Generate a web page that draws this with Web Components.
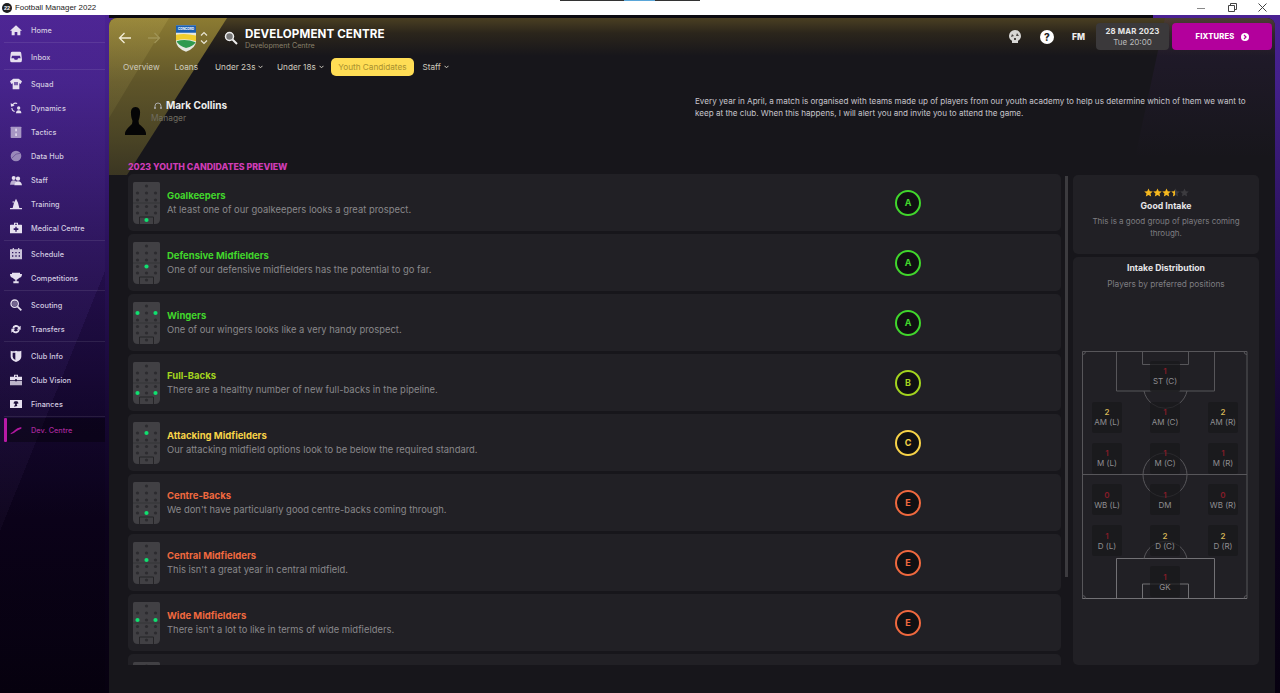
<!DOCTYPE html>
<html><head><meta charset="utf-8"><title>Football Manager 2022</title>
<style>
html,body{margin:0;height:693px;width:1280px;overflow:hidden;background:#0a0214;font-family:Inter,"Liberation Sans",sans-serif}
</style></head><body>
<fm-app>
  <fm-titlebar slot="title"></fm-titlebar>
  <fm-sidebar slot="side">
    <fm-nav-group gap="2"><fm-nav-item icon="home">Home</fm-nav-item></fm-nav-group>
    <fm-nav-group gap="2"><fm-nav-item icon="inbox">Inbox</fm-nav-item></fm-nav-group>
    <fm-nav-group gap="1">
      <fm-nav-item icon="squad">Squad</fm-nav-item><fm-nav-item icon="dynamics">Dynamics</fm-nav-item><fm-nav-item icon="tactics">Tactics</fm-nav-item><fm-nav-item icon="data">Data Hub</fm-nav-item><fm-nav-item icon="staff">Staff</fm-nav-item><fm-nav-item icon="training">Training</fm-nav-item><fm-nav-item icon="medical">Medical Centre</fm-nav-item>
    </fm-nav-group>
    <fm-nav-group gap="2"><fm-nav-item icon="schedule">Schedule</fm-nav-item><fm-nav-item icon="trophy">Competitions</fm-nav-item></fm-nav-group>
    <fm-nav-group gap="2"><fm-nav-item icon="scout">Scouting</fm-nav-item><fm-nav-item icon="transfers">Transfers</fm-nav-item></fm-nav-group>
    <fm-nav-group gap="1"><fm-nav-item icon="shield">Club Info</fm-nav-item><fm-nav-item icon="vision">Club Vision</fm-nav-item><fm-nav-item icon="finance">Finances</fm-nav-item></fm-nav-group>
    <fm-nav-group last><fm-nav-item icon="dev" active>Dev. Centre</fm-nav-item></fm-nav-group>
  </fm-sidebar>
  <fm-main slot="main">
    <fm-header></fm-header>
    <fm-tabs>
      <fm-tab pr="6.5">Overview</fm-tab><fm-tab>Loans</fm-tab><fm-tab menu pr="5">Under 23s</fm-tab><fm-tab menu pr="7">Under 18s</fm-tab><fm-tab active>Youth Candidates</fm-tab><fm-tab menu>Staff</fm-tab>
    </fm-tabs>
    <fm-intro></fm-intro>
    <fm-section>2023 YOUTH CANDIDATES PREVIEW</fm-section>
    <fm-content>
      <fm-list>
        <fm-row dots="13.5,38" grade="A" color="#41d62c" name="Goalkeepers" desc="At least one of our goalkeepers looks a great prospect."></fm-row>
        <fm-row dots="13.5,24" grade="A" color="#41d62c" name="Defensive Midfielders" desc="One of our defensive midfielders has the potential to go far."></fm-row>
        <fm-row dots="4.5,11;22.5,11" grade="A" color="#41d62c" name="Wingers" desc="One of our wingers looks like a very handy prospect."></fm-row>
        <fm-row dots="4.5,31;22.5,31" grade="B" color="#a3d41f" name="Full-Backs" desc="There are a healthy number of new full-backs in the pipeline."></fm-row>
        <fm-row dots="13.5,11" grade="C" color="#f7d348" name="Attacking Midfielders" desc="Our attacking midfield options look to be below the required standard."></fm-row>
        <fm-row dots="13.5,31" grade="E" color="#f0693f" name="Centre-Backs" desc="We don't have particularly good centre-backs coming through."></fm-row>
        <fm-row dots="13.5,18" grade="E" color="#f0693f" name="Central Midfielders" desc="This isn't a great year in central midfield."></fm-row>
        <fm-row dots="4.5,18;22.5,18" grade="E" color="#f0693f" name="Wide Midfielders" desc="There isn't a lot to like in terms of wide midfielders."></fm-row>
        <fm-row dots="" grade="" color="#f0693f" name="" desc=""></fm-row>
      </fm-list>
      <fm-scrollbar></fm-scrollbar>
      <fm-aside>
        <fm-summary></fm-summary>
        <fm-distribution>
          <fm-pitch>
            <fm-pos n="" l="" style="visibility:hidden"></fm-pos><fm-pos n="1" l="ST (C)"></fm-pos><fm-pos n="" l="" style="visibility:hidden"></fm-pos>
            <fm-pos n="2" l="AM (L)"></fm-pos><fm-pos n="1" l="AM (C)"></fm-pos><fm-pos n="2" l="AM (R)"></fm-pos>
            <fm-pos n="1" l="M (L)"></fm-pos><fm-pos n="1" l="M (C)"></fm-pos><fm-pos n="1" l="M (R)"></fm-pos>
            <fm-pos n="0" l="WB (L)"></fm-pos><fm-pos n="1" l="DM"></fm-pos><fm-pos n="0" l="WB (R)"></fm-pos>
            <fm-pos n="1" l="D (L)"></fm-pos><fm-pos n="2" l="D (C)"></fm-pos><fm-pos n="2" l="D (R)"></fm-pos>
            <fm-pos n="" l="" style="visibility:hidden"></fm-pos><fm-pos n="1" l="GK"></fm-pos><fm-pos n="" l="" style="visibility:hidden"></fm-pos>
          </fm-pitch>
        </fm-distribution>
      </fm-aside>
    </fm-content>
  </fm-main>
</fm-app>
<script>
const ICONS={
home:'<path d="M9 2 L18 10 L15.5 10 L15.5 17 L11 17 L11 12 L7 12 L7 17 L2.5 17 L2.5 10 L0 10 Z"/>',
inbox:'<path fill-rule="evenodd" d="M3 1 H15 Q17 1 17 4 L18 13 Q18 17 15 17 H3 Q0 17 0 13 L1 4 Q1 1 3 1 Z M3 7 L2 11 H6 L7 13 H11 L12 11 H16 L15 7 Z"/>',
squad:'<path fill-rule="evenodd" d="M5 1 H13 L18 5 L16 9 L14 8 V17 H4 V8 L2 9 L0 5 Z M6.5 6 V11 H8.5 V6 Z M9.5 6 V11 H11.5 V6 Z" />',
dynamics:'<path d="M4 3 A6 6 0 0 1 11 1.5 L10.500 3 A4.500 4.500 0 0 0 5 4.500 L7 5.500 L1.500 7 L1 2 Z M2 9 H3.500 A5 5 0 0 0 7 13.500 V15 A6.500 6.500 0 0 1 2 9 Z"/><circle cx="13" cy="9" r="2.500"/><path d="M9 17 Q9 12.500 13 12.500 Q17 12.500 17 17 Z"/>',
tactics:'<rect x="1" y="1" width="16" height="17" rx="1" opacity=".62"/><rect x="8" y="4" width="2.200" height="4"/><rect x="8" y="11" width="2.200" height="4"/>',
data:'<circle cx="9" cy="9" r="8" opacity=".55"/><path d="M3 12 Q9 4 15 5" stroke="#4a2b7e" fill="none" opacity=".7"/>',
staff:'<circle cx="5.500" cy="6" r="3"/><path d="M0 16 Q1 9.500 5.500 9.500 Q9 9.500 10 12 L8 16 Z" opacity=".75"/><circle cx="12" cy="7" r="3.200"/><path d="M6.500 17 Q7.500 11 12 11 Q17 11 18 17 Z"/>',
training:'<path d="M9 1 L12 7 L14 15 H18 V17 H0 V15 H4 L6 7 Z"/><circle cx="5" cy="6" r="1.500" opacity=".6"/>',
medical:'<path fill-rule="evenodd" d="M6 1 H12 V4 H17 Q18 4 18 5 V17 H0 V5 Q0 4 1 4 H6 Z M7.500 2.500 V4 H10.500 V2.500 Z M8 7 V9.500 H5.500 V12 H8 V14.500 H10 V12 H12.500 V9.500 H10 V7 Z"/>',
schedule:'<path fill-rule="evenodd" d="M4 0 H6 V2 H12 V0 H14 V2 H18 V17 H0 V2 H4 Z M3 6 V8 H5 V6 Z M8 6 V8 H10 V6 Z M13 6 V8 H15 V6 Z M3 11 V13 H5 V11 Z M8 11 V13 H10 V11 Z M13 11 V13 H15 V11 Z" opacity=".85"/>',
trophy:'<path d="M3 1 H15 V3 H18 Q18 8 13.500 9 Q12.500 11 10 11.500 V14 H13 V17 H5 V14 H8 V11.500 Q5.500 11 4.500 9 Q0 8 0 3 H3 Z"/>',
scout:'<circle cx="7" cy="7" r="5.500" fill="none" stroke="currentColor" stroke-width="2"/><circle cx="7" cy="7" r="4" opacity=".4"/><path d="M11 11 L17 17" stroke="currentColor" stroke-width="2.600"/>',
transfers:'<path d="M3.500 8 A5.800 5.800 0 0 1 14 5.500 L16 4 V10 H10 L12.300 7.500 A3.500 3.500 0 0 0 6 8.500 Z"/><path d="M14.500 10.500 A5.800 5.800 0 0 1 4 13 L2 14.500 V8.500 H8 L5.700 11 A3.500 3.500 0 0 0 12 10 Z"/>',
shield:'<path fill-rule="evenodd" d="M1 1 Q5 2.500 9 1 Q13 2.500 17 1 V10 Q17 15 9 18 Q1 15 1 10 Z M4 4 V10 Q4 13 8 15 V4 Z"/>',
vision:'<path fill-rule="evenodd" d="M6 1 H12 V4 H18 V9 H10.500 V8 H7.500 V9 H0 V4 H6 Z M7.500 2.500 V4 H10.500 V2.500 Z"/><path d="M0 10 H7.500 V11 H10.500 V10 H18 V17 H0 Z" opacity=".8"/>',
finance:'<path fill-rule="evenodd" d="M0 3 H18 V15 H0 Z M7 5 L5 8 L8 9 L6 13 L11 12 L10 9 L13 8 L11 5 Z"/>',
dev:'<path d="M1 14 Q5 12 7 9.500 Q10 6 17 4.500 V7 Q12 8.500 9.500 11 Q6.500 14 1 15.500 Z"/>'
};
function def(name,html,init){
  customElements.define(name,class extends HTMLElement{
    constructor(){super();this.attachShadow({mode:'open'});}
    connectedCallback(){
      this.shadowRoot.innerHTML=typeof html==='function'?html(this):html;
      if(init)init(this);
    }
  });
}
const a=(e,n)=>e.getAttribute(n)||'';

def('fm-app',`<style>
:host{display:grid;grid-template-rows:15px 678px;grid-template-columns:109px 1171px;width:1280px;height:693px;position:relative;overflow:hidden;
background:linear-gradient(180deg,#4c2294 0,#43208a 12%,#2b125c 35%,#170835 58%,#0c021c 75%,#070110 100%)}
.t{grid-column:1/3}
.m{min-width:0;background:linear-gradient(90deg,#0c0a10 0 1044px,transparent 1044px) no-repeat 0 0/100% 3px}
</style><div class="t"><slot name="title"></slot></div><slot name="side"></slot><div class="m"><slot name="main"></slot></div>`);

def('fm-titlebar',`<style>
:host{display:flex;align-items:center;height:15px;background:#fff;color:#222;font:7.900px "Liberation Sans",sans-serif;padding-left:2px;position:relative}
.logo{width:10px;height:10px;border-radius:50%;background:#1d1d1f;color:#fff;font:bold 5.5px/10px "Liberation Sans";text-align:center;margin-right:3px}
.sp{flex:1}
svg{display:block}
.b{width:46px;display:flex;justify-content:center}
.strip{position:absolute;left:560px;top:0;width:140px;height:1px;background:linear-gradient(90deg,#333 0 46%,#5aa6d8 46% 68%,#333 68%)}
</style><span class="logo">22</span><span>Football Manager 2022</span><span class="strip"></span><span class="sp"></span>
<span class="b"><svg width="8" height="8"><path d="M0 4.500H8" stroke="#888"/></svg></span>
<span class="b" style="width:30px;margin-left:-7px"><svg width="9" height="9" fill="none" stroke="#444"><path d="M.5 2.500h6v6h-6zM2.500 2.500v-2h6v6h-2"/></svg></span>
<span class="b" style="width:30px;margin-right:3px"><svg width="9" height="9" fill="none" stroke="#444"><path d="M.5.5l8 8M8.500.5l-8 8"/></svg></span>`);

def('fm-sidebar',`<style>
:host{display:block;padding:3px 0 0 4px;width:101px;position:relative;color:#d8cfe6;
background:linear-gradient(112deg,rgba(255,255,255,.02) 0 55%,rgba(0,0,0,.12) 55% 100%)}
</style><slot></slot>`);

def('fm-nav-group',e=>`<style>
:host{display:block;${e.hasAttribute('last')?'':'border-bottom:1px solid rgba(255,255,255,.09);'}margin-bottom:${a(e,'gap')||0}px}
</style><slot></slot>`);

def('fm-nav-item',e=>{
  const act=e.hasAttribute('active');
  return `<style>
:host{display:flex;align-items:center;height:24px;font:500 7.300px Inter,"Liberation Sans",sans-serif;letter-spacing:.05px;position:relative;color:${act?'#a6279a':'#d3cbe0'};${act?'background:rgba(0,0,0,.35);':''}}
svg{width:12px;height:12px;margin-left:6px;margin-right:9px;fill:${act?'#b0189e':'#e6e0ef'};color:${act?'#b0189e':'#e6e0ef'};flex:none}
.bar{position:absolute;left:0;top:0;width:2.500px;height:100%;background:#b81aa6;border-radius:1px}
</style>${act?'<span class="bar"></span>':''}<svg viewBox="0 0 18 18">${ICONS[a(e,'icon')]}</svg><slot></slot>`;
});

def('fm-main',`<style>
:host{display:block;position:relative;height:675px;margin-top:3px;width:1166px;border-radius:8px 8px 0 0;overflow:hidden;background:#17161b}
.topfill{position:absolute;left:0;top:0;width:100%;height:38px;background:linear-gradient(180deg,#4a3f22 0,rgba(60,50,28,.55) 40%,rgba(30,26,20,0) 100%);}
.w1{position:absolute;left:0;top:0;width:125px;height:160px;clip-path:polygon(0 0,118px 0,18px 157px,0 157px);background:linear-gradient(180deg,#8c7b32 0,#5f5529 40%,#4a4425 75%,#3a3522 100%)}
.w2{position:absolute;left:0;top:0;width:125px;height:160px;clip-path:polygon(0 0,60px 0,0 100px);background:linear-gradient(180deg,rgba(255,235,130,.12),rgba(255,235,130,.02))}
.w3{position:absolute;right:0;top:0;width:140px;height:140px;clip-path:polygon(30px 0,100% 0,100% 100%,0 100%);background:linear-gradient(180deg,rgba(90,50,140,.16),rgba(60,30,100,0))}
.c{position:relative}
</style><span class="topfill"></span><span class="w3"></span><span class="w1"></span><span class="w2"></span><div class="c"><slot></slot></div>`);

const ic={
back:'<svg width="14" height="12" viewBox="0 0 14 12" fill="none" stroke="#f4eed8" stroke-width="1.300"><path d="M13 6H1.500M6.500 1L1.500 6l5 5"/></svg>',
fwd:'<svg width="14" height="12" viewBox="0 0 14 12" fill="none" stroke="#a09456" stroke-width="1.300"><path d="M1 6h11.500M7.500 1l5 5-5 5"/></svg>'
};
def('fm-header',`<style>
:host{display:flex;align-items:center;height:40px;color:#fff;font-family:Inter,"Liberation Sans",sans-serif}
.back{margin-left:9px;display:flex}.fwd{margin-left:15px;display:flex;margin-right:15px}
.ud{margin-left:4px;margin-right:16px;display:flex}
.s{margin-right:7px;display:flex}
.tt{margin-top:2px}
h1{font:700 11.600px/14px Inter,"Liberation Sans",sans-serif;margin:0;letter-spacing:.1px}
.sub{font-size:7.200px;color:#87806a;line-height:10px}
.sp{flex:1}
.rt{display:flex;align-items:center;height:27px;margin-top:-3px}
.ico{display:flex}
.date{width:73px;height:27px;background:#3b393b;border-radius:4px;text-align:center;font-size:8px;line-height:10.500px;color:#bbb;display:flex;flex-direction:column;justify-content:center;margin-right:3px}
.date b{color:#e6e5e4;font-size:7.800px;letter-spacing:.2px}
.fx{width:100px;height:27px;background:#b3009c;border-radius:4px;display:flex;align-items:center;justify-content:center;font:800 7.600px Inter,"Liberation Sans",sans-serif;gap:6px;margin-right:3px;letter-spacing:.2px}
.fm{font:800 8.500px Inter,"Liberation Sans",sans-serif;margin:0 11px 0 18px;color:#eee}
</style>
<span class="back">${ic.back}</span><span class="fwd">${ic.fwd}</span>
<svg width="20" height="28" viewBox="0 0 21 29"><path d="M0 1H21V18Q21 25 10.500 29Q0 25 0 18Z" fill="#e6e8e0"/><path d="M0 1H21V9H0Z" fill="#1b5fb0"/><text x="10.500" y="6.500" font-size="3.300" font-weight="700" fill="#fff" text-anchor="middle" font-family="Inter">CONCORD</text><path d="M0 11Q10 9 21 12V18Q10 14 0 17Z" fill="#f0cd2d"/><path d="M0.500 18Q10 15 20.500 19Q19 23 10.500 25Q3 23 .5 18Z" fill="#2f9a4e"/></svg>
<span class="ud"><svg width="8" height="16" viewBox="0 0 8 16" fill="none" stroke="#e8e4d4" stroke-width="1.200"><path d="M1 5.500l3-3 3 3M1 10.500l3 3 3-3"/></svg></span>
<span class="s"><svg width="14" height="14" viewBox="0 0 14 14"><circle cx="5.500" cy="5.500" r="4" fill="#777" stroke="#eee" stroke-width="1.500"/><path d="M8.500 8.500L13 13" stroke="#eee" stroke-width="2"/></svg></span>
<div class="tt"><h1>DEVELOPMENT CENTRE</h1><div class="sub">Development Centre</div></div>
<span class="sp"></span>
<div class="rt">
<span class="ico" style="margin-right:18px"><svg width="14" height="15" viewBox="0 0 14 15"><path d="M7 1a6 6 0 0 1 6 6c0 2.200-1.200 3.800-3 4.700V14H4v-2.300C2.200 10.800 1 9.200 1 7a6 6 0 0 1 6-6z" fill="#d8d7d5"/><path d="M4 5l2 2-3 1zM9 4l2 3-3 0zM6 9h2v2H6z" fill="#4a4744"/></svg></span>
<span class="ico"><svg width="14" height="14" viewBox="0 0 14 14"><circle cx="7" cy="7" r="7" fill="#fff"/><text x="7" y="10.500" text-anchor="middle" font-size="10" font-weight="800" fill="#222" font-family="Inter">?</text></svg></span>
<span class="fm">FM</span>
<div class="date"><b>28 MAR 2023</b><span>Tue 20:00</span></div>
<div class="fx"><span>FIXTURES</span><svg width="8" height="8" viewBox="0 0 8 8"><circle cx="4" cy="4" r="4" fill="#fff"/><path d="M3 2l2 2-2 2" stroke="#b3009c" stroke-width="1.200" fill="none"/></svg></div>
</div>`);

def('fm-tabs',`<style>:host{display:flex;align-items:center;height:18px;padding-left:5.500px}</style><slot></slot>`);
def('fm-tab',e=>{
  const act=e.hasAttribute('active'),menu=e.hasAttribute('menu');
  const pr=a(e,'pr')||(act?7.5:menu?7:8.5);
  return `<style>
:host{display:flex;align-items:center;height:18px;padding:0 ${pr}px 0 ${act?7.5:8.5}px;gap:3px;font:400 8.200px Inter,"Liberation Sans",sans-serif;color:${act?'#a8902f':'#cfcbbf'};${act?'background:#ffdd55;border-radius:5px;':''}}
</style><slot></slot>${menu?'<svg width="5" height="4" viewBox="0 0 5 4" fill="none" stroke="#cfcbbf"><path d="M.5 .8l2 2 2-2"/></svg>':''}`;
});

def('fm-intro',`<style>
:host{display:flex;height:80px;margin-top:0;font-family:Inter,"Liberation Sans",sans-serif}
.sil{margin:31px 0 0 16px;display:block}
.who{margin:23px 0 0 6px;width:543px}
.n{display:flex;align-items:center;gap:4px;color:#eee;font-weight:700;font-size:10px;line-height:13px;padding-left:2px}
.r{font-size:8.400px;color:#6f6c60;line-height:13px;margin-left:-1px}
p{margin:19px 0 0 0;width:560px;font-size:8.100px;line-height:12.300px;color:#c7c5cc}
</style>
<svg class="sil" width="21" height="28" viewBox="0 0 21 28"><path d="M10.500 0C14 0 15.500 3 15 7C14.800 10 14 12 13.500 14L14 17C16 19 20 21 21 26V28H0V26C1 22 5 19 7 17L7.500 14C7 12 6 10 6 7C5.500 3 7 0 10.500 0Z" fill="#050506"/></svg>
<div class="who"><div class="n"><svg width="8" height="8" viewBox="0 0 8 8" fill="none" stroke="#aaa"><path d="M1 6V4a3 3 0 0 1 6 0v2"/><path d="M1 5v2M7 5v2" stroke-width="1.600"/></svg><span>Mark Collins</span></div><div class="r">Manager</div></div>
<p>Every year in April, a match is organised with teams made up of players from our youth academy to help us determine which of them we want to keep at the club. When this happens, I will alert you and invite you to attend the game.</p>`);

def('fm-section',`<style>:host{display:block;margin:0 0 0 19px;height:18px;font:800 8.800px/21px Inter,"Liberation Sans",sans-serif;color:#cf3db6}</style><slot></slot>`);

def('fm-content',`<style>:host{display:flex;height:491px;margin-left:19px;padding-top:0}</style><slot></slot>`);
def('fm-list',`<style>:host{display:flex;flex-direction:column;gap:3px;width:933px;overflow:hidden;height:491px;flex:none}</style><slot></slot>`);
def('fm-scrollbar',`<style>:host{display:block;width:3px;height:401px;background:#3c3b3f;margin:2px 5px 0 4px;flex:none}</style>`);

def('fm-row',e=>{
  const name=a(e,'name'),col=a(e,'color'),g=a(e,'grade');
  return `<style>
:host{display:flex;align-items:center;height:57px;flex:none;background:#212025;border-radius:5px;position:relative;font-family:Inter,"Liberation Sans",sans-serif}
fm-minipitch{margin-left:5px}
.t{margin-left:7px;width:728px;flex:none}
.n{font-weight:700;font-size:9.500px;line-height:14px;color:${col}}
.d{font-size:9.400px;line-height:14px;color:#89888b;letter-spacing:.02px;white-space:nowrap}
.g{width:22px;height:22px;border-radius:50%;border:2.500px solid ${col};background:#101012;color:${col};display:flex;align-items:center;justify-content:center;font-size:9px;font-weight:700}
</style><fm-minipitch dots="${a(e,'dots')}"></fm-minipitch><div class="t"><div class="n">${name}</div><div class="d">${a(e,'desc')}</div></div>${g?`<div class="g">${g}</div>`:''}`;
});

def('fm-minipitch',e=>{
  let d='';
  [[13.5,4],[4.5,11],[13.5,11],[22.5,11],[4.5,18],[13.5,18],[22.5,18],[4.5,24.5],[13.5,24.5],[22.5,24.5],[4.5,31],[13.5,31],[22.5,31],[13.5,38]].forEach(p=>{d+=`<circle cx="${p[0]}" cy="${p[1]}" r="1.600" fill="#2c2b2f"/>`;});
  (a(e,'dots')||'').split(';').filter(Boolean).forEach(s=>{const [x,y]=s.split(',').map(Number);const yy=y===24?24.5:y;d+=`<circle cx="${x}" cy="${yy}" r="2.100" fill="#10e070"/>`;});
  return `<style>:host{display:block;width:27px;height:42px;flex:none}svg{display:block}</style>
<svg width="27" height="42" viewBox="0 0 27 42"><path d="M0 1.500Q0 0 1.500 0H25.500Q27 0 27 1.500V37Q27 42 22 42H5Q0 42 0 37Z" fill="#414044"/><path d="M0 21H27" stroke="#2c2b2f" stroke-width=".6"/><path d="M6.500 42V35H20.500V42" fill="none" stroke="#252427"/>${d}</svg>`;
});

def('fm-aside',`<style>:host{display:flex;flex-direction:column;gap:3px;width:186px;flex:none;margin-top:1px}</style><slot></slot>`);
const star=(f)=>`<svg width="9" height="9" viewBox="0 0 24 24"><defs><linearGradient id="h"><stop offset=".5" stop-color="#f5b81f"/><stop offset=".5" stop-color="#3c3b3f"/></linearGradient></defs><path d="M12 1l3.400 7.400 8 .9-6 5.400 1.700 7.900L12 18.600 4.900 22.600l1.700-7.900-6-5.400 8-.9z" fill="${f}"/></svg>`;
def('fm-summary',`<style>
:host{display:block;height:79px;background:#212025;border-radius:5px;text-align:center;padding-top:13px;box-sizing:border-box;font-family:Inter,"Liberation Sans",sans-serif}
.s{display:flex;justify-content:center;height:9px}
.b{font-weight:700;font-size:8.700px;color:#e6e5e8;line-height:12px;margin-top:3px}
.d{font-size:8px;color:#7e7d81;line-height:12px;margin:3px auto 0;width:160px}
</style><div class="s">${star('#f5b81f')+star('#f5b81f')+star('#f5b81f')+star('url(#h)')+star('#3c3b3f')}</div><div class="b">Good Intake</div><div class="d">This is a good group of players coming through.</div>`);
def('fm-distribution',`<style>
:host{display:block;height:408px;background:#212025;border-radius:5px;box-sizing:border-box;text-align:center;padding-top:5px;font-family:Inter,"Liberation Sans",sans-serif}
.b{font-weight:700;font-size:8.700px;color:#e6e5e8;line-height:12px}
.d{font-size:8.300px;color:#7e7d81;line-height:12px;margin-top:4px}
.w{margin:61px 0 0 9px}
</style><div class="b">Intake Distribution</div><div class="d">Players by preferred positions</div><div class="w"><slot></slot></div>`);
def('fm-pitch',`<style>
:host{display:grid;position:relative;width:165px;height:248px;box-sizing:border-box;padding:9.500px 0 0 10px;grid-template-columns:repeat(3,30px);column-gap:28px;grid-template-rows:repeat(6,31px);row-gap:10.200px}
svg{position:absolute;left:0;top:0}
</style><svg width="166" height="249" viewBox="0 0 166 249" fill="none" stroke="#57565a"><path d="M.5 .5H165V247.500H.5Z"/><path d="M34.500 .5V40H132.500V.5M60.500 .5V13.500H106.500V.5"/><path d="M62 40A22 22 0 0 0 105 40"/><path d="M.5 123.500H165"/><circle cx="83" cy="124" r="22"/><g stroke="#727175"><path d="M.5 247.500H165M34.500 247.500V207.500H132.500V247.500M60.500 247.500V233H106.500V247.500"/></g><path d="M62 207.500A22 22 0 0 1 105 207.500"/><path d="M.5 3.500A3 3 0 0 0 3.500 .5M162 .5A3 3 0 0 0 165 3.500M.5 244.500A3 3 0 0 1 3.500 247.500M162 247.500A3 3 0 0 1 165 244.500"/></svg><slot></slot>`);
def('fm-pos',e=>{
  const n=a(e,'n');
  return `<style>
:host{display:flex;flex-direction:column;align-items:center;justify-content:center;width:30px;height:31px;background:rgba(24,23,27,.72);position:relative;font-family:Inter,"Liberation Sans",sans-serif;border-radius:2px}
.n{font-size:8px;line-height:10px;font-weight:600;color:${n==='2'?'#d4b556':'#861c28'}}
.l{font-size:8px;line-height:10px;color:#8f8e92;white-space:nowrap}
</style><span class="n">${n}</span><span class="l">${a(e,'l')}</span>`;
});
</script>
</body></html>
